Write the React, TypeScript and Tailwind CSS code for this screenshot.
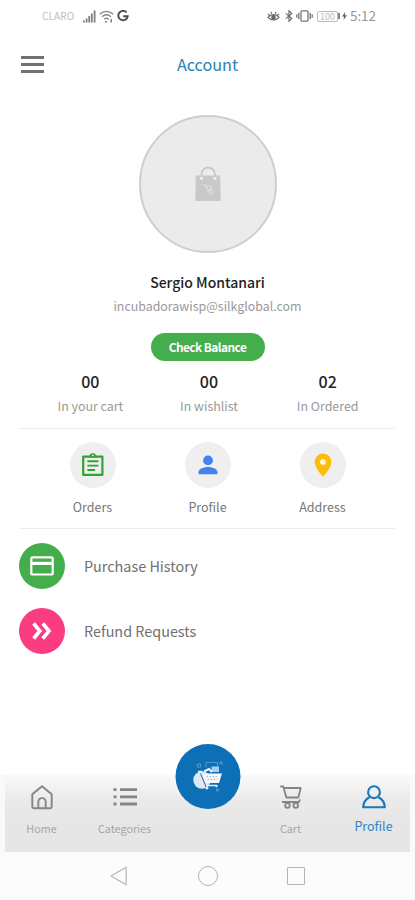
import React from 'react'

const STATS = [
  { value: '00', label: 'In your cart' },
  { value: '00', label: 'In wishlist' },
  { value: '02', label: 'In Ordered' },
]

const SHORTCUTS = [
  { label: 'Orders', icon: <OrdersIcon /> },
  { label: 'Profile', icon: <PersonIcon /> },
  { label: 'Address', icon: <PinIcon /> },
]

function OrdersIcon() {
  return (
    <svg width="24" height="26" viewBox="0 0 24 26" fill="none" stroke="#2fa336">
      <path d="M2.2 4.6h19.2v18.2H2.2z" strokeWidth="2.2" strokeLinejoin="round" />
      <path d="M8 5.4a3.8 3.8 0 0 1 7.6 0z" fill="#2fa336" stroke="none" />
      <circle cx="11.8" cy="3.4" r="1.5" strokeWidth="1.1" fill="#efefef" />
      <path d="M6.4 9.2h11M6.4 13.6h11M6.4 18h7.6" strokeWidth="1.9" />
    </svg>
  )
}

function PersonIcon() {
  return (
    <svg width="20" height="20" viewBox="0 0 20 20" fill="#3f82f0">
      <circle cx="10" cy="5.4" r="4.9" />
      <path d="M.6 19.2v-2.4c0-3.2 6-4.8 9.400-4.800s9.400 1.600 9.400 4.800v2.400z" />
    </svg>
  )
}

function PinIcon() {
  return (
    <svg width="18" height="24" viewBox="0 0 18 24">
      <path d="M9 .6A8.3 8.3 0 0 0 .7 8.900C.7 15.100 9 23.600 9 23.600s8.300-8.500 8.300-14.700A8.300 8.300 0 0 0 9 .6z" fill="#fbbd07" />
      <circle cx="9" cy="8.900" r="2.900" fill="#fff6dc" />
    </svg>
  )
}

function StatusBar() {
  return (
    <div className="flex h-8 items-center justify-between pl-[42px] pr-[39px] text-[#999]">
      <div className="flex items-center">
        <span className="w-[41px] text-[10px] leading-none tracking-[0.1px] text-[#bdbdbd]">CLARO</span>
        <svg width="13" height="13" viewBox="0 0 13 13" stroke="#808080" strokeWidth="1.8">
          <path d="M1 12.500v-2M3.600 12.500v-4M6.200 12.500V6M8.800 12.500v-9M11.600 12.500V.5" />
        </svg>
        <svg className="ml-[3px]" width="15" height="13" viewBox="0 0 15 13" fill="none" stroke="#888" strokeWidth="1.3">
          <path d="M.8 4.200c4-3.800 9.400-3.800 13.400 0M3 6.800c2.800-2.600 6.200-2.600 9 0M5.200 9.200c1.500-1.200 3.100-1.200 4.600 0" />
          <path d="M6 11.800h2M12.200 9v3.600" strokeWidth="1.6" />
        </svg>
        <svg className="ml-[3px]" width="12" height="12" viewBox="0 0 12 12" fill="none" stroke="#4c4c4c" strokeWidth="1.9">
          <path d="M9.600 2.500A4.700 4.700 0 1 0 10.700 6.300H6.200" />
        </svg>
      </div>
      <div className="flex items-center">
        <svg width="13" height="11" viewBox="0 0 13 11" fill="none" stroke="#666" strokeWidth="1.2">
          <path d="M1 6.300c3-3.600 8-3.600 11 0-3 3.500-8 3.500-11 0zM1 3l1.600 1.400M4 1l.7 1.800M9 1l-.7 1.800M12 3l-1.600 1.400" />
          <circle cx="6.500" cy="6.200" r="1.700" fill="#666" />
        </svg>
        <svg className="ml-[5px]" width="8" height="12" viewBox="0 0 8 12" fill="none" stroke="#666" strokeWidth="1.1">
          <path d="M.8 3.300 6.800 8.600 4 11.200V.8l2.800 2.600-6 5.200" />
        </svg>
        <svg className="ml-[3px]" width="17" height="12" viewBox="0 0 17 12" fill="none" stroke="#777" strokeWidth="1.3">
          <rect x="5" y=".8" width="7" height="10.400" rx="1" />
          <path d="M2.800 2.800v6.400M.8 4.200v3.600M14.200 2.800v6.400M16.200 4.200v3.600" />
        </svg>
        <span className="ml-[4px] flex h-[11px] w-[21px] items-center justify-center rounded-[2px] border border-[#bbb] text-[9px] leading-none text-[#bbb]">
          100
        </span>
        <span className="h-[6px] w-[2px] bg-[#888]" />
        <svg className="ml-[2px]" width="5" height="8" viewBox="0 0 5 8" fill="#666">
          <path d="M3.200 0 0 4.600h2L1.600 8 5 3.200H3z" />
        </svg>
        <span className="ml-[3px] w-[26px] whitespace-nowrap text-[13.5px] leading-none tracking-[-0.1px]">5:12</span>
      </div>
    </div>
  )
}

function Avatar() {
  return (
    <div className="mx-auto mt-[19px] flex h-[138px] w-[138px] items-center justify-center rounded-full border-2 border-[#cecece] bg-[#ebebeb]">
      <svg width="26" height="36" viewBox="0 0 26 36" fill="none">
        <path d="M.8 9.500h24.400l.6 25.500H.2z" fill="#c9c9c9" />
        <path d="M6.500 12V8.200a6.700 6.700 0 0 1 13.400 0V12" stroke="#c9c9c9" strokeWidth="1.9" />
        <circle cx="6.500" cy="12.500" r="1.800" fill="#ebebeb" />
        <circle cx="19.900" cy="12.500" r="1.800" fill="#ebebeb" />
        <path d="M6.500 18.500l4.500.5 1 4M9 20l2.500 1.500" stroke="#dedede" />
        <circle cx="14" cy="22" r="2.200" stroke="#e2e2e2" />
        <circle cx="16.200" cy="26" r="2" stroke="#e2e2e2" />
        <path d="M17.600 20.500 12 26" stroke="#e2e2e2" />
      </svg>
    </div>
  )
}

function CenterButton() {
  return (
    <div className="h-[65px] w-[65px] rounded-full bg-[#0d70b7]">
      <svg width="65" height="65" viewBox="0 0 65 65" fill="none">
        <circle cx="26.500" cy="36" r="8.700" fill="#dfe8f6" />
        <path d="M30.500 23v-4.500h11.500v4M22 20h3v3h-3zM44.500 18h2v2h-2zM41 45h2v2h-2z" stroke="#5e9ed0" strokeWidth=".9" />
        <path d="M36 22.500h7.500V28H36z" fill="#a9cdf2" />
        <path d="M28.500 27.500l5-2.500 3 3" stroke="#e7effa" strokeWidth="2" />
        <path d="M26 29.500h20.500L43.500 39H29.500z" fill="#f5f8fd" />
        <path d="M31 32.500h12M32 35.500h10" stroke="#a5b9d4" strokeDasharray="1.5 1.5" />
        <path d="M22.500 27.500h3.500l4.500 14h10.500" stroke="#e3ebf8" strokeWidth="1.4" />
        <path d="M25 29.500l6 14.500" stroke="#28507f" strokeWidth=".9" />
        <circle cx="31.500" cy="44" r="1.500" fill="#e3ebf8" />
        <circle cx="41" cy="42" r="1.200" fill="#e3ebf8" />
      </svg>
    </div>
  )
}

function BottomNav() {
  return (
    <nav className="relative h-[77px] border-x-[5px] border-[#f9f9f9] bg-linear-to-b from-[#fafafa] via-[#ebebeb] via-30% to-[#e6e6e6] to-60%">
      <div className="-mx-[5px] grid grid-cols-5">
        <div className="flex flex-col items-center pt-2.5">
          <svg width="22" height="25" viewBox="0 0 22 25" fill="none" stroke="#858585" strokeWidth="1.9" strokeLinejoin="round">
            <path d="M1.300 9.300 11 1.300l9.700 8v12.200a1.800 1.800 0 0 1-1.800 1.800H3.100a1.800 1.800 0 0 1-1.800-1.800z" />
            <path d="M7.300 23v-6.200a3.700 3.700 0 0 1 7.400 0V23" />
          </svg>
          <span className="mt-3 text-[10.8px] leading-3 text-[#a6a6a6]">Home</span>
        </div>
        <div className="flex flex-col items-center pt-2.5">
          <svg width="24" height="25" viewBox="0 0 24 25" stroke="#858585" strokeWidth="2.8">
            <path d="M7 4.600h17M7 11.800h17M7 19h17M.5 4.600h3M.5 11.800h3M.5 19h3" />
          </svg>
          <span className="mt-3 text-[10.8px] leading-3 text-[#a6a6a6]">Categories</span>
        </div>
        <div />
        <div className="flex flex-col items-center pt-2.5">
          <svg width="22" height="25" viewBox="0 0 22 25" fill="none" stroke="#858585" strokeWidth="1.8" strokeLinejoin="round">
            <path d="M.3 1.500h3l3 11h12L20.800 3H4M2 17h17l1-2.500" />
            <circle cx="7.500" cy="20.500" r="2.300" />
            <circle cx="15.800" cy="20.500" r="2.300" />
          </svg>
          <span className="mt-3 text-[10.8px] leading-3 text-[#a6a6a6]">Cart</span>
        </div>
        <div className="flex flex-col items-center pt-2.5">
          <svg width="24" height="25" viewBox="0 0 24 25" fill="none" stroke="#1b75bb" strokeWidth="2.1" strokeLinejoin="round">
            <circle cx="12" cy="7.200" r="5.900" />
            <path d="M7.600 12.300C4 14 1.500 17.500 1.200 22.300h21.600c-.3-4.800-2.800-8.300-6.400-10" />
          </svg>
          <span className="mt-2 text-[12.5px] leading-4 text-[#3482c0]">Profile</span>
        </div>
      </div>
      {/* Floating shop button, overlaps the top edge of the bar */}
      <div className="absolute -top-[31px] left-1/2 -translate-x-1/2">
        <CenterButton />
      </div>
    </nav>
  )
}

export default function App() {
  return (
    <div className="flex h-[900px] w-[415px] flex-col overflow-hidden bg-white font-['Noto_Sans_CJK_SC',sans-serif]">
      <StatusBar />

      {/* Header */}
      <header className="grid h-16 grid-cols-[1fr_auto_1fr] items-center">
        <button className="ml-[21px] flex w-[23px] flex-col gap-[4px]">
          <span className="h-[3px] w-full bg-[#717171]" />
          <span className="h-[3px] w-full bg-[#717171]" />
          <span className="h-[3px] w-full bg-[#717171]" />
        </button>
        <h1 className="text-[16.2px] leading-none text-[#2f80b5]">Account</h1>
      </header>

      <Avatar />

      <section className="flex flex-col items-center">
        <h2 className="mt-[19px] text-[14px] font-medium leading-5 text-[#222]">Sergio Montanari</h2>
        <p className="mt-1 text-[12.4px] leading-5 text-[#999]">incubadorawisp@silkglobal.com</p>
        <button className="mt-[17px] h-7 w-[114px] rounded-full bg-[#43ae4b] text-[11.8px] font-bold leading-none tracking-[-0.5px] text-white">
          Check Balance
        </button>
      </section>

      {/* Counters */}
      <section className="ml-[31px] mt-2.5 grid h-[57px] w-[356px] grid-cols-3 text-center">
        {STATS.map(stat => (
          <div key={stat.label}>
            <p className="text-[16px] font-medium leading-5 text-[#222]">{stat.value}</p>
            <p className="mt-[5px] text-[12.4px] leading-5 text-[#999]">{stat.label}</p>
          </div>
        ))}
      </section>

      {/* Shortcuts */}
      <section className="mx-5 flex h-[101px] justify-center border-y border-[#ececec] pt-[13px]">
        {SHORTCUTS.map(item => (
          <div key={item.label} className="flex w-[115px] flex-col items-center">
            <div className="flex h-[46px] w-[46px] items-center justify-center rounded-full bg-[#efefef]">{item.icon}</div>
            <p className="mt-[9px] text-[12.5px] leading-5 text-[#777]">{item.label}</p>
          </div>
        ))}
      </section>

      <section className="ml-[19px] mt-3.5 flex flex-1 flex-col gap-[19px]">
        <div className="flex items-center gap-[19px]">
          <div className="flex h-[46px] w-[46px] items-center justify-center rounded-full bg-[#43ae4b]">
            <svg width="24" height="20" viewBox="0 0 24 20" fill="none" stroke="white" strokeWidth="2.2">
              <rect x="1.300" y="1.300" width="21.400" height="17.200" rx="1.500" />
              <path d="M2 7.400h20" strokeWidth="3.2" />
            </svg>
          </div>
          <span className="text-[14.4px] leading-none text-[#707070]">Purchase History</span>
        </div>
        <div className="flex items-center gap-[19px]">
          <div className="flex h-[46px] w-[46px] items-center justify-center rounded-full bg-[#fb3c80]">
            <svg width="20" height="18" viewBox="0 0 20 18" fill="none" stroke="white" strokeWidth="3.6">
              <path d="M1.600 1.500 7.800 9l-6.200 7.500M10.800 1.500 17 9l-6.200 7.500" />
            </svg>
          </div>
          <span className="text-[14.4px] leading-none text-[#707070]">Refund Requests</span>
        </div>
      </section>

      <BottomNav />

      {/* Android system buttons */}
      <div className="flex h-12 items-center bg-[#fcfcfc] pl-[110px]">
        <svg width="17" height="20" viewBox="0 0 17 20" fill="none" stroke="#b5b5b5" strokeWidth="1.2" strokeLinejoin="round">
          <path d="M16.200 1.200v17.600L1 10z" />
        </svg>
        <span className="ml-[71px] h-5 w-5 rounded-full border border-[#b5b5b5]" />
        <span className="ml-[69px] h-[18px] w-[18px] rounded-[1px] border border-[#b5b5b5]" />
      </div>
    </div>
  )
}
